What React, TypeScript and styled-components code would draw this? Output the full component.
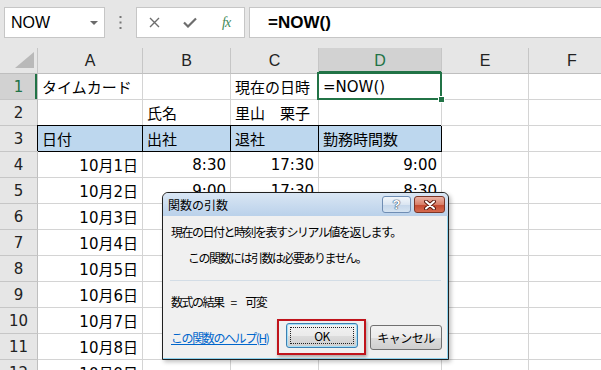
import React from "react";
import styled, { createGlobalStyle, css } from "styled-components";

const GlobalStyle = createGlobalStyle`
  html, body {
    margin: 0;
    padding: 0;
    background: #fff;
    overflow: hidden;
  }
`;

const CJK = `"DejaVu Sans", "Noto Sans CJK JP", sans-serif`;
const UI = `"Noto Sans CJK JP", "Noto Sans", sans-serif`;

const Page = styled.div`
  position: relative;
  width: 601px;
  height: 370px;
  overflow: hidden;
  background: #fff;
  font-family: ${CJK};
`;

/* ---------- formula bar ---------- */

const FormulaBar = styled.div`
  display: flex;
  align-items: flex-start;
  height: 48px;
  padding: 7px 0 0 4px;
  box-sizing: border-box;
  background: #e6e6e6;
`;

const NameBox = styled.div`
  display: flex;
  align-items: center;
  justify-content: space-between;
  width: 101px;
  height: 31px;
  padding: 0 6px;
  box-sizing: border-box;
  background: #fff;
  border: 1px solid #c6c6c6;
  font-family: "Liberation Sans", sans-serif;
  font-size: 16px;
  color: #000;
`;

const DropArrow = styled.span`
  width: 0;
  height: 0;
  border-left: 4px solid transparent;
  border-right: 4px solid transparent;
  border-top: 4px solid #6b6b6b;
`;

const Dots = styled.div`
  display: flex;
  align-items: center;
  justify-content: center;
  width: 31px;
  height: 31px;
`;

const FxBox = styled.div`
  display: grid;
  grid-template-columns: repeat(3, 1fr);
  align-items: center;
  justify-items: center;
  width: 109px;
  height: 31px;
  box-sizing: border-box;
  background: #fff;
  border: 1px solid #c6c6c6;
`;

const FxMark = styled.span`
  font-family: "Liberation Serif", serif;
  font-style: italic;
  font-size: 14px;
  color: #3f8a58;
  letter-spacing: -1px;
`;

const FormulaInput = styled.div`
  flex: 1;
  display: flex;
  align-items: center;
  height: 31px;
  margin-left: 4px;
  padding-left: 18px;
  box-sizing: border-box;
  background: #fff;
  border: 1px solid #c6c6c6;
  border-right: none;
  font-family: "Liberation Sans", sans-serif;
  font-weight: bold;
  font-size: 17px;
  color: #000;
`;

/* ---------- sheet ---------- */

const Sheet = styled.div`
  display: grid;
  grid-template-columns: 38px 105px 88px 88px 123px 87px 87px;
  grid-auto-rows: 26px;
`;

const Corner = styled.div`
  display: flex;
  align-items: flex-end;
  justify-content: flex-end;
  padding: 0 3px 5px 0;
  background: #e6e6e6;
  border-right: 1px solid #c6c6c6;
  border-bottom: 1px solid #bfbfbf;
  &::after {
    content: "";
    width: 0;
    height: 0;
    border-left: 19px solid transparent;
    border-bottom: 16px solid #b9b9b9;
  }
`;

const ColHead = styled.div<{ $active?: boolean }>`
  display: flex;
  align-items: center;
  justify-content: center;
  background: ${(p) => (p.$active ? "#d2d2d2" : "#e6e6e6")};
  color: ${(p) => (p.$active ? "#217346" : "#222")};
  border-right: 1px solid #c6c6c6;
  border-bottom: 1px solid #bfbfbf;
  font-family: "Liberation Sans", sans-serif;
  font-size: 16px;
  ${(p) => p.$active && css`box-shadow: inset 0 -2px 0 #217346;`}
`;

const RowHead = styled.div<{ $active?: boolean }>`
  display: flex;
  align-items: center;
  justify-content: center;
  background: ${(p) => (p.$active ? "#d2d2d2" : "#e6e6e6")};
  color: ${(p) => (p.$active ? "#217346" : "#222")};
  border-right: 1px solid #bfbfbf;
  border-bottom: 1px solid #c6c6c6;
  font-size: 15px;
  ${(p) => p.$active && css`box-shadow: inset -2px 0 0 #217346;`}
`;

const Cell = styled.div<{ $right?: boolean; $boxed?: boolean; $selected?: boolean }>`
  position: ${(p) => (p.$selected ? "relative" : "static")};
  display: flex;
  align-items: center;
  justify-content: ${(p) => (p.$right ? "flex-end" : "flex-start")};
  padding: 0 4px;
  white-space: nowrap;
  border-right: 1px solid #d4d4d4;
  border-bottom: 1px solid #d4d4d4;
  font-size: 15px;
  color: #000;
  ${(p) =>
    p.$boxed &&
    css`
      background: #bdd7ee;
      border-right-color: #000;
      border-bottom-color: #000;
      box-shadow: -1px -1px 0 #000;
    `}
  ${(p) =>
    p.$selected &&
    css`
      &::before {
        content: "";
        position: absolute;
        top: -2px;
        left: -2px;
        right: -1px;
        bottom: -1px;
        border: 2px solid #217346;
      }
      &::after {
        content: "";
        position: absolute;
        right: -4px;
        bottom: -4px;
        width: 5px;
        height: 5px;
        background: #217346;
        border: 1px solid #fff;
      }
    `}
`;

/* ---------- dialog ---------- */

const Dialog = styled.div`
  position: absolute;
  left: 162px;
  top: 192px;
  width: 287px;
  height: 168px;
  box-sizing: border-box;
  display: flex;
  flex-direction: column;
  background: #f0f0f0;
  border: 1px solid #1f1f1f;
  border-radius: 6px 6px 0 0;
  box-shadow: inset -1px -1px 0 #8fd3ee, 2px 2px 4px rgba(0, 0, 0, 0.25);
  overflow: hidden;
  font-family: ${UI};
  font-size: 12px;
  color: #000;
`;

const TitleBar = styled.div`
  display: flex;
  align-items: center;
  gap: 3px;
  height: 23px;
  padding: 0 3px 0 5px;
  background: linear-gradient(#d9e6f4, #bad1ea);
  border-radius: 5px 5px 0 0;
`;

const TitleText = styled.span`
  flex: 1;
  font-size: 12px;
`;

const CaptionButton = styled.div<{ $close?: boolean }>`
  display: flex;
  align-items: center;
  justify-content: center;
  width: ${(p) => (p.$close ? "31px" : "29px")};
  height: 17px;
  box-sizing: border-box;
  border-radius: 3px;
  border: 1px solid ${(p) => (p.$close ? "#7c3526" : "#6f8db3")};
  background: ${(p) =>
    p.$close
      ? "linear-gradient(#eab3a6, #d97f69 50%, #c2472f 51%, #d56a4e)"
      : "linear-gradient(#f3f7fb, #dbe6f2 50%, #c4d6ea 51%, #d5e3f1)"};
  font-family: "Liberation Sans", sans-serif;
  font-weight: bold;
  font-size: 13px;
  color: #fff;
  text-shadow: 0 0 1px #2f4866, 0 0 1px #2f4866, 0 0 1px #2f4866;
`;

const Body = styled.div`
  display: flex;
  flex-direction: column;
  padding: 0 8px;
  letter-spacing: -1.5px;
`;

const Line = styled.div<{ $indent?: number; $gap: number }>`
  display: flex;
  height: 16px;
  line-height: 16px;
  margin-top: ${(p) => p.$gap}px;
  padding-left: ${(p) => p.$indent ?? 0}px;
  white-space: nowrap;
`;

const Equals = styled.span`
  margin: 0 8px 0 7px;
  letter-spacing: 0;
`;

const Separator = styled.div`
  height: 1px;
  margin: 14px -1px 0;
  background: #d3dde6;
`;

const ButtonRow = styled.div`
  display: grid;
  grid-template-columns: 102px auto auto;
  column-gap: 4px;
  align-items: center;
  margin-top: 9px;
`;

const HelpLink = styled.a`
  color: #0066cc;
  text-decoration: underline;
  white-space: nowrap;
  letter-spacing: -1.4px;
`;

const Highlight = styled.div`
  display: flex;
  padding: 2px 6px 5px 7px;
  border: 2px solid #c0141c;
  box-shadow: 1px 2px 3px rgba(0, 0, 0, 0.3);
`;

const DialogButton = styled.div<{ $focused?: boolean }>`
  position: relative;
  display: flex;
  align-items: center;
  justify-content: center;
  width: 72px;
  height: 25px;
  box-sizing: border-box;
  border-radius: 3px;
  border: 1px solid ${(p) => (p.$focused ? "#3c7fb1" : "#707070")};
  background: linear-gradient(#f2f2f2, #ebebeb 50%, #dddddd 51%, #cfcfcf);
  font-size: 12px;
  letter-spacing: -0.5px;
  ${(p) =>
    p.$focused &&
    css`
      box-shadow: inset 0 0 0 1px #a6e0f8;
      &::after {
        content: "";
        position: absolute;
        inset: 3px;
        border: 1px dotted #222;
      }
    `}
`;

type Row = { cells: string[]; boxed?: boolean };

const rows: Row[] = [
  { cells: ["タイムカード", "", "現在の日時", "=NOW()", "", ""] },
  { cells: ["", "氏名", "里山　栗子", "", "", ""] },
  { cells: ["日付", "出社", "退社", "勤務時間数", "", ""], boxed: true },
  { cells: ["10月1日", "8:30", "17:30", "9:00", "", ""] },
  { cells: ["10月2日", "9:00", "17:30", "8:30", "", ""] },
  { cells: ["10月3日", "", "", "", "", ""] },
  { cells: ["10月4日", "", "", "", "", ""] },
  { cells: ["10月5日", "", "", "", "", ""] },
  { cells: ["10月6日", "", "", "", "", ""] },
  { cells: ["10月7日", "", "", "", "", ""] },
  { cells: ["10月8日", "", "", "", "", ""] },
  { cells: ["10月9日", "", "", "", "", ""] },
];

const columns = ["A", "B", "C", "D", "E", "F"];

function isRight(rowIndex: number, text: string) {
  return rowIndex >= 3 && text !== "";
}

export default function App() {
  return (
    <>
      <GlobalStyle />
      <Page>
        <FormulaBar>
          <NameBox>
            NOW
            <DropArrow />
          </NameBox>
          <Dots>
            <svg width="3" height="13" viewBox="0 0 3 13">
              <rect x="0.5" y="0" width="2" height="2" fill="#777" />
              <rect x="0.5" y="5.5" width="2" height="2" fill="#777" />
              <rect x="0.5" y="11" width="2" height="2" fill="#777" />
            </svg>
          </Dots>
          <FxBox>
            <svg width="11" height="11" viewBox="0 0 11 11">
              <path d="M1 1 L10 10 M10 1 L1 10" stroke="#6d6d6d" strokeWidth="1.4" />
            </svg>
            <svg width="14" height="11" viewBox="0 0 14 11">
              <path d="M1 5.5 L5 9.5 L13 1.5" stroke="#6d6d6d" strokeWidth="2.2" fill="none" />
            </svg>
            <FxMark>fx</FxMark>
          </FxBox>
          <FormulaInput>=NOW()</FormulaInput>
        </FormulaBar>

        <Sheet>
          <Corner />
          {columns.map((c) => (
            <ColHead key={c} $active={c === "D"}>
              {c}
            </ColHead>
          ))}
          {rows.map((row, r) => (
            <React.Fragment key={r}>
              <RowHead $active={r === 0}>{r + 1}</RowHead>
              {row.cells.map((text, c) => (
                <Cell
                  key={c}
                  $right={isRight(r, text)}
                  $boxed={row.boxed && c < 4}
                  $selected={r === 0 && c === 3}
                >
                  {text}
                </Cell>
              ))}
            </React.Fragment>
          ))}
        </Sheet>

        <Dialog>
          <TitleBar>
            <TitleText>関数の引数</TitleText>
            <CaptionButton>?</CaptionButton>
            <CaptionButton $close>
              <svg width="12" height="10" viewBox="0 0 12 10">
                <path d="M2 1.5 L10 8.5 M10 1.5 L2 8.5" stroke="#5a1b10" strokeWidth="4" strokeLinecap="round" />
                <path d="M2 1.5 L10 8.5 M10 1.5 L2 8.5" stroke="#fff" strokeWidth="2" strokeLinecap="round" />
              </svg>
            </CaptionButton>
          </TitleBar>
          <Body>
            <Line $gap={8}>現在の日付と時刻を表すシリアル値を返します。</Line>
            <Line $gap={10} $indent={17}>
              この関数には引数は必要ありません。
            </Line>
            <Separator />
            <Line $gap={13}>
              数式の結果<Equals>=</Equals>可変
            </Line>
            <ButtonRow>
              <HelpLink>この関数のヘルプ(H)</HelpLink>
              <Highlight>
                <DialogButton $focused>OK</DialogButton>
              </Highlight>
              <DialogButton>キャンセル</DialogButton>
            </ButtonRow>
          </Body>
        </Dialog>
      </Page>
    </>
  );
}
